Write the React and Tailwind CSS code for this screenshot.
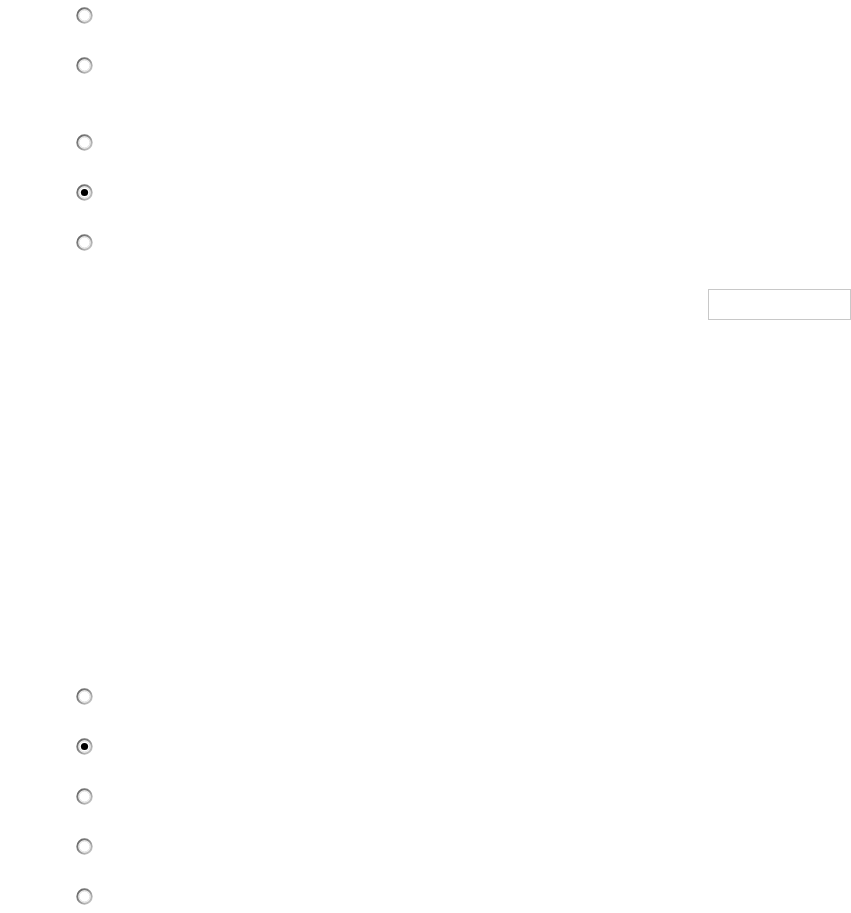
const Radio = ({ checked = false }) => (
  <svg width="17" height="17" viewBox="0 0 17 17" className="block">
    <defs>
      <linearGradient id="rimGrad" x1="0" y1="0" x2="1" y2="1">
        <stop offset="0" stopColor="#5e5e5e" />
        <stop offset="0.5" stopColor="#8f8f8f" />
        <stop offset="1" stopColor="#d0d0d0" />
      </linearGradient>
    </defs>
    <circle cx="8.5" cy="8.5" r="7.2" fill="#ffffff" stroke="url(#rimGrad)" strokeWidth="2" />
    <circle cx="8.5" cy="8.5" r="5.5" fill="none" stroke="#dcdcdc" strokeWidth="1" />
    {checked && <circle cx="8.5" cy="8.5" r="3.6" fill="#000000" />}
  </svg>
)

const RadioGroup = ({ items }) => (
  <div className="flex flex-col gap-[33px]">
    {items.map((checked, i) => (
      <label key={i} className="flex items-center h-[17px]">
        <Radio checked={checked} />
      </label>
    ))}
  </div>
)

export default function App() {
  return (
    <div className="w-[851px] h-[913px] bg-white overflow-hidden pt-[7px]" style={{ fontFamily: '"Liberation Sans", Arial, sans-serif' }}>
      <div className="pl-[76px]">
        <RadioGroup items={[false, false]} />
      </div>
      <div className="pl-[76px] mt-[60px]">
        <RadioGroup items={[false, true, false]} />
      </div>
      <div className="flex justify-end mt-[38px]">
        <input type="text" className="w-[143px] h-[31px] border border-[#c8c8c8] bg-white outline-none" />
      </div>
      <div className="pl-[76px] mt-[368px]">
        <RadioGroup items={[false, true, false, false, false]} />
      </div>
    </div>
  )
}
